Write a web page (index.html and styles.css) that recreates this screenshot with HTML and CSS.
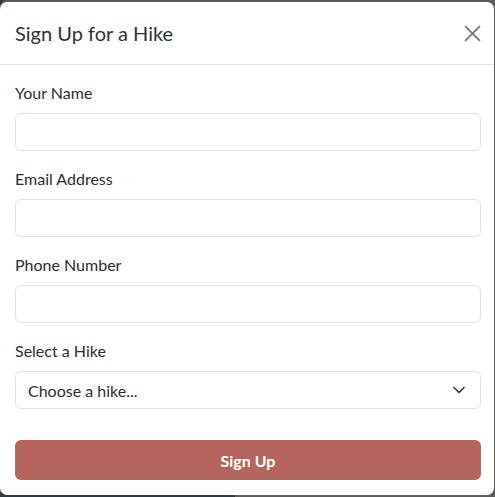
FILE: index.html
```html
<!DOCTYPE html>
<html>
<head>
<meta charset="utf-8">
<link rel="stylesheet" href="styles.css">
</head>
<body>
<div class="modal">
  <div class="modal-header">
    <h5 class="modal-title">Sign Up for a Hike</h5>
    <button class="btn-close" aria-label="Close">
      <svg width="17" height="17" viewBox="0 0 16 16"><path d="M1 1L15 15M15 1L1 15" stroke="#7a7a7a" stroke-width="1.8" fill="none"/></svg>
    </button>
  </div>
  <form class="modal-body">
    <div class="field">
      <label class="label">Your Name</label>
      <input class="control" type="text">
    </div>
    <div class="field">
      <label class="label">Email Address</label>
      <input class="control" type="email">
    </div>
    <div class="field">
      <label class="label">Phone Number</label>
      <input class="control" type="tel">
    </div>
    <div class="field">
      <label class="label">Select a Hike</label>
      <div class="select">
        <span>Choose a hike...</span>
        <svg width="14" height="10" viewBox="0 0 16 12"><path d="M2 3l6 6 6-6" stroke="#343a40" stroke-width="2" fill="none" stroke-linecap="round" stroke-linejoin="round"/></svg>
      </div>
    </div>
    <button type="button" class="submit">Sign Up</button>
  </form>
</div>
</body>
</html>
```
FILE: styles.css
```css
* { box-sizing: border-box; }
html, body { margin: 0; padding: 0; }
body {
  background: linear-gradient(to right, #2b3a3f 0, #2b3a3f 235px, #5c5c5a 235px);
  font-family: Lato, "Open Sans", sans-serif;
  color: #212529;
  height: 497px;
  overflow: hidden;
  padding-top: 2px;
}
body::before {
  content: "";
}
.modal {
  width: 494px;
  height: 493px;
  background: #fff;
  border-radius: 7px;
  display: flex;
  flex-direction: column;
  box-shadow: 0 -2px 0 #5c5c5a, 1px 0 0 #5c5c5a;
}
.modal-header {
  display: flex;
  align-items: center;
  justify-content: space-between;
  padding: 16px 13px 16px 15px;
  border-bottom: 1px solid #dee2e6;
  height: 63px;
}
.modal-title {
  margin: 0;
  font-size: 20px;
  font-weight: 400;
  line-height: 30px;
  color: #2a3533;
}
.btn-close {
  border: 0;
  background: none;
  padding: 0;
  width: 17px;
  height: 17px;
  display: flex;
}
.modal-body {
  padding: 16px 13px 15px 15px;
  display: flex;
  flex-direction: column;
  margin: 0;
}
.field {
  display: flex;
  flex-direction: column;
  margin-bottom: 16px;
}
.label {
  font-size: 16px;
  line-height: 24px;
  color: #2b2f33;
  margin-bottom: 8px;
}
.control {
  height: 38px;
  border: 1px solid #dee2e6;
  border-radius: 6px;
  font: inherit;
  padding: 6px 12px;
  background: #fff;
}
.select {
  height: 38px;
  border: 1px solid #dee2e6;
  border-radius: 6px;
  padding: 0 14px 0 12px;
  display: flex;
  align-items: center;
  justify-content: space-between;
  font-size: 16px;
  color: #2b2f33;
}
.submit {
  margin-top: 15px;
  height: 40px;
  border: 0;
  border-radius: 6px;
  background: #b5655d;
  color: #fff;
  font-family: inherit;
  font-size: 16px;
  font-weight: 700;
  padding: 0;
}
```
